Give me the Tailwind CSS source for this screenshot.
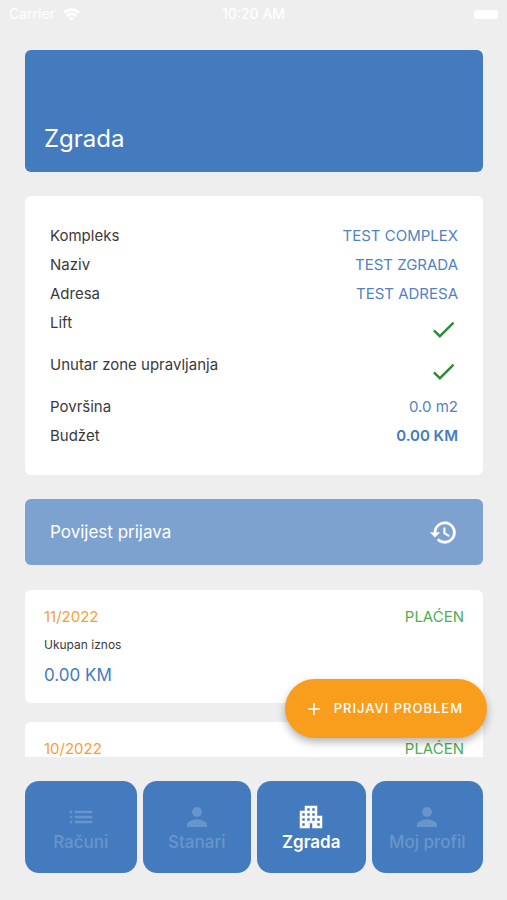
<!DOCTYPE html>
<html lang="hr">
<head>
<meta charset="utf-8">
<meta name="viewport" content="width=device-width, initial-scale=1">
<title>Zgrada</title>
<script src="https://cdn.jsdelivr.net/npm/@tailwindcss/browser@4"></script>
</head>
<body class="flex h-screen flex-col overflow-hidden bg-[#eeeeee] font-['Inter',sans-serif] text-[15px] text-[#3a3a3a]">
  <header class="grid h-[50px] shrink-0 grid-cols-3 items-start px-[9px] text-[14px] leading-7 text-white">
    <div class="flex items-center gap-2">
      <span>Carrier</span>
      <svg class="h-[13px] w-[17px]" viewBox="0 0 17 13" fill="none" stroke="currentColor" stroke-width="2.8" aria-hidden="true"><path d="M1 4.8a10.6 10.6 0 0 1 15 0M3.8 7.900a6.600 6.600 0 0 1 9.400 0"/><path d="M8.500 12.800 6 10.200a3.600 3.600 0 0 1 5 0z" fill="currentColor" stroke="none"/></svg>
    </div>
    <time class="text-center font-medium">10:20 AM</time>
    <div class="flex h-7 items-center justify-end"><span class="h-[9px] w-6 rounded-[3px] bg-white"></span></div>
  </header>

  <div class="relative flex min-h-0 flex-1 flex-col pr-6 pl-[25px]">
    <main class="flex min-h-0 flex-1 flex-col overflow-y-auto [scrollbar-width:none]">
      <div class="flex h-[122px] shrink-0 items-end rounded-md bg-[#437bbe] px-[19px] pb-[17px]">
        <h1 class="text-[24px] leading-8 text-white">Zgrada</h1>
      </div>

      <dl class="mt-6 shrink-0 rounded-md bg-white p-[25px] leading-[29px]">
        <div class="flex justify-between"><dt>Kompleks</dt><dd class="text-[#5282c4]">TEST COMPLEX</dd></div>
        <div class="flex justify-between"><dt>Naziv</dt><dd class="text-[#5282c4]">TEST ZGRADA</dd></div>
        <div class="flex justify-between"><dt>Adresa</dt><dd class="text-[#5282c4]">TEST ADRESA</dd></div>
        <div class="flex h-[42px] justify-between"><dt>Lift</dt><dd class="self-center"><svg class="size-[29px]" viewBox="0 0 24 24" fill="#2e8b35" role="img" aria-label="Da"><path d="M9 16.200 4.800 12l-1.400 1.400L9 19 21 7l-1.400-1.400z"/></svg></dd></div>
        <div class="flex h-[42px] justify-between"><dt>Unutar zone upravljanja</dt><dd class="self-center"><svg class="size-[29px]" viewBox="0 0 24 24" fill="#2e8b35" role="img" aria-label="Da"><path d="M9 16.200 4.800 12l-1.400 1.400L9 19 21 7l-1.400-1.400z"/></svg></dd></div>
        <div class="flex justify-between"><dt>Površina</dt><dd class="text-[#5282c4]">0.0 m2</dd></div>
        <div class="flex justify-between"><dt>Budžet</dt><dd class="font-semibold text-[#437bbe]">0.00 KM</dd></div>
      </dl>

      <button type="button" class="mt-6 flex h-[66px] shrink-0 items-center justify-between rounded-md bg-[#7da2d0] px-[25px] text-left text-[17px] leading-6 text-white">
        <span>Povijest prijava</span>
        <svg class="size-[29px]" viewBox="0 0 24 24" fill="currentColor" stroke="currentColor" stroke-width="0.3" aria-hidden="true"><path d="M13 3a9 9 0 0 0-9 9H1l3.890 3.890.070.140L9 12H6a7 7 0 1 1 2.060 4.940l-1.420 1.420A9 9 0 1 0 13 3zm-1 5v5l4.280 2.540.720-1.210-3.500-2.080V8H12z"/></svg>
      </button>

      <article class="mt-[25px] shrink-0 rounded-md bg-white px-[19px] pt-4 pb-4">
        <div class="flex justify-between leading-[22px]"><h2 class="text-[#f9a02f]">11/2022</h2><span class="text-[#4caf50]">PLAĆEN</span></div>
        <p class="mt-[7px] text-[12px] leading-5">Ukupan iznos</p>
        <p class="mt-2 text-[17px] leading-6 text-[#437bbe]">0.00 KM</p>
      </article>
      <article class="mt-[19px] shrink-0 rounded-md bg-white px-[19px] pt-4 pb-4">
        <div class="flex justify-between leading-[22px]"><h2 class="text-[#f9a02f]">10/2022</h2><span class="text-[#4caf50]">PLAĆEN</span></div>
        <p class="mt-[7px] text-[12px] leading-5">Ukupan iznos</p>
        <p class="mt-2 text-[17px] leading-6 text-[#437bbe]">0.00 KM</p>
      </article>
    </main>
    <button type="button" class="absolute right-5 bottom-[19px] flex h-[59px] items-center gap-2.5 rounded-full bg-[#f99d1c] pr-6 pl-[19px] text-[13px] font-medium tracking-[1px] text-white shadow-[0_4px_8px_rgba(0,0,0,0.3)]">
      <svg class="size-5" viewBox="0 0 24 24" fill="currentColor" aria-hidden="true"><path d="M19 13h-6v6h-2v-6H5v-2h6V5h2v6h6z"/></svg>
      <span>PRIJAVI PROBLEM</span>
    </button>
  </div>

  <nav class="grid shrink-0 grid-cols-4 pt-6 pr-6 pb-[27px] pl-[25px] text-[17px] leading-5 font-medium">
    <div class="pr-[3px]"><a href="#" class="flex h-[92px] flex-col items-center rounded-[14px] bg-[#437bbe] pt-[21px] text-[#6895cb]">
      <svg class="size-[30px]" viewBox="0 0 24 24" fill="currentColor" aria-hidden="true"><path d="M3 13h2v-2H3v2zm0 4h2v-2H3v2zm0-8h2V7H3v2zm4 4h14v-2H7v2zm0 4h14v-2H7v2zM7 7v2h14V7H7z"/></svg>Računi</a></div>
    <div class="px-[3px]"><a href="#" class="flex h-[92px] flex-col items-center rounded-[14px] bg-[#437bbe] pt-[21px] text-[#6895cb]">
      <svg class="size-[30px]" viewBox="0 0 24 24" fill="currentColor" aria-hidden="true"><path d="M12 12a4 4 0 1 0 0-8 4 4 0 0 0 0 8zm0 2c-2.670 0-8 1.340-8 4v2h16v-2c0-2.660-5.330-4-8-4z"/></svg>Stanari</a></div>
    <div class="px-[3px]"><a href="#" aria-current="page" class="flex h-[92px] flex-col items-center rounded-[14px] bg-[#437bbe] pt-[21px] font-semibold text-white">
      <svg class="size-[30px]" viewBox="0 0 24 24" fill="currentColor" aria-hidden="true"><path d="M17 11V3H7v4H3v14h8v-4h2v4h8V11h-4zM7 19H5v-2h2v2zm0-4H5v-2h2v2zm0-4H5V9h2v2zm4 4H9v-2h2v2zm0-4H9V9h2v2zm0-4H9V5h2v2zm4 8h-2v-2h2v2zm0-4h-2V9h2v2zm0-4h-2V5h2v2zm4 12h-2v-2h2v2zm0-4h-2v-2h2v2z"/></svg>Zgrada</a></div>
    <div class="pl-[3px]"><a href="#" class="flex h-[92px] flex-col items-center rounded-[14px] bg-[#437bbe] pt-[21px] text-[#6895cb]">
      <svg class="size-[30px]" viewBox="0 0 24 24" fill="currentColor" aria-hidden="true"><path d="M12 12a4 4 0 1 0 0-8 4 4 0 0 0 0 8zm0 2c-2.670 0-8 1.340-8 4v2h16v-2c0-2.660-5.330-4-8-4z"/></svg>Moj profil</a></div>
  </nav>
</body>
</html>
